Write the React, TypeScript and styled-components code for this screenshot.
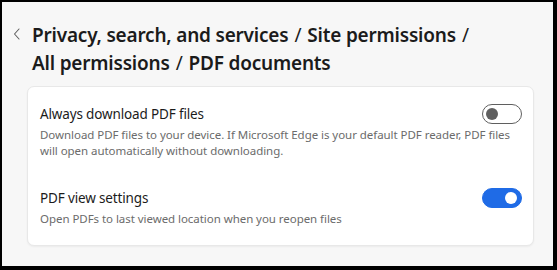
import React, { FC, useState } from 'react'
import styled, { createGlobalStyle } from 'styled-components'

/////////GLOBAL/////////
const GlobalStyle = createGlobalStyle`
	html, body {
		margin: 0;
		padding: 0;
		background: #000;
	}
	body {
		font-family: 'Noto Sans', 'Open Sans', sans-serif;
		-webkit-font-smoothing: antialiased;
	}
`

/////////STYLED/////////
const Frame = styled.div`
	width: 557px;
	height: 270px;
	box-sizing: border-box;
	padding: 2px 4px 4px 2px;
	background: #000;
`
const Page = styled.div`
	height: 100%;
	box-sizing: border-box;
	background: #f7f7f7;
	padding: 19px 19px 0 8px;
`
const Header = styled.div`
	display: grid;
	grid-template-columns: 22px 1fr;
	align-items: start;
`
const BackButton = styled.button`
	display: flex;
	align-items: center;
	justify-content: center;
	width: 14px;
	height: 20px;
	margin-top: 3px;
	padding: 0;
	border: none;
	background: transparent;
	cursor: pointer;
`
const Title = styled.h1`
	margin: 0;
	font-size: 19px;
	line-height: 28px;
	font-weight: 600;
	color: #1b1b1b;
	letter-spacing: -0.2px;
`
const Crumb = styled.span`
	white-space: nowrap;
`
const Separator = styled.span`
	margin: 0 6px;
	font-weight: 400;
`
const Card = styled.div`
	margin: 9px 0 0 17px;
	background: #fff;
	border: 1px solid #e8e8e8;
	border-radius: 7px;
	box-shadow: 0 1px 2px rgba(0, 0, 0, 0.05);
	padding: 17px 11px 18px 12px;
	display: grid;
	grid-row-gap: 29px;
`
const Row = styled.div`
	display: grid;
	grid-template-columns: minmax(0, 1fr) 40px;
	grid-column-gap: 8px;
	align-items: start;
`
const RowText = styled.div`
	display: grid;
	grid-row-gap: 3px;
`
const RowTitle = styled.div`
	font-size: 13.5px;
	line-height: 20px;
	color: #1b1b1b;
	letter-spacing: -0.15px;
`
const RowDesc = styled.div`
	font-size: 11.5px;
	line-height: 16px;
	color: #6b6b6b;
	letter-spacing: -0.05px;
	white-space: nowrap;
`
const Track = styled.button<{ $on: boolean }>`
	position: relative;
	width: 40px;
	height: 20px;
	margin-top: 0;
	padding: 0;
	box-sizing: border-box;
	border-radius: 10px;
	border: 1px solid ${(p) => (p.$on ? '#1f6be6' : '#5f5f5f')};
	background: ${(p) => (p.$on ? '#1f6be6' : '#fff')};
	cursor: pointer;
`
const Knob = styled.span<{ $on: boolean }>`
	position: absolute;
	top: 3px;
	left: ${(p) => (p.$on ? '22px' : '3px')};
	width: 12px;
	height: 12px;
	border-radius: 50%;
	background: ${(p) => (p.$on ? '#fff' : '#5f5f5f')};
`

/////////TYPES//////////
type ToggleProps = {
	on: boolean
	onChange: () => void
}

type SettingRowProps = {
	title: string
	description: React.ReactNode
	on: boolean
	onChange: () => void
}

const Toggle: FC<ToggleProps> = ({ on, onChange }) => (
	<Track $on={on} onClick={onChange} aria-pressed={on}>
		<Knob $on={on} />
	</Track>
)

const SettingRow: FC<SettingRowProps> = ({ title, description, on, onChange }) => (
	<Row>
		<RowText>
			<RowTitle>{title}</RowTitle>
			<RowDesc>{description}</RowDesc>
		</RowText>
		<Toggle on={on} onChange={onChange} />
	</Row>
)

const ChevronLeft: FC = () => (
	<svg width="8" height="12" viewBox="0 0 8 12" fill="none">
		<path d="M6 1 L1.5 6 L6 11" stroke="#5f5f5f" strokeWidth="1.1" strokeLinecap="round" strokeLinejoin="round" />
	</svg>
)

const App: FC = () => {
	const [alwaysDownload, setAlwaysDownload] = useState(false)
	const [viewSettings, setViewSettings] = useState(true)

	///////////////////////////////// RENDER ///////////////////////////////////////

	return (
		<Frame>
			<GlobalStyle />
			<Page>
				<Header>
					<BackButton aria-label="Back">
						<ChevronLeft />
					</BackButton>
					<Title>
						<Crumb>Privacy, search, and services</Crumb>
						<Separator>/</Separator>
						<Crumb>Site permissions</Crumb>
						<Separator>/</Separator>
						<br />
						<Crumb>All permissions</Crumb>
						<Separator>/</Separator>
						<Crumb>PDF documents</Crumb>
					</Title>
				</Header>
				<Card>
					<SettingRow
						title="Always download PDF files"
						description={
							<>
								Download PDF files to your device. If Microsoft Edge is your default PDF reader, PDF files
								<br />
								will open automatically without downloading.
							</>
						}
						on={alwaysDownload}
						onChange={() => setAlwaysDownload(!alwaysDownload)}
					/>
					<SettingRow
						title="PDF view settings"
						description="Open PDFs to last viewed location when you reopen files"
						on={viewSettings}
						onChange={() => setViewSettings(!viewSettings)}
					/>
				</Card>
			</Page>
		</Frame>
	)
}

export default App
